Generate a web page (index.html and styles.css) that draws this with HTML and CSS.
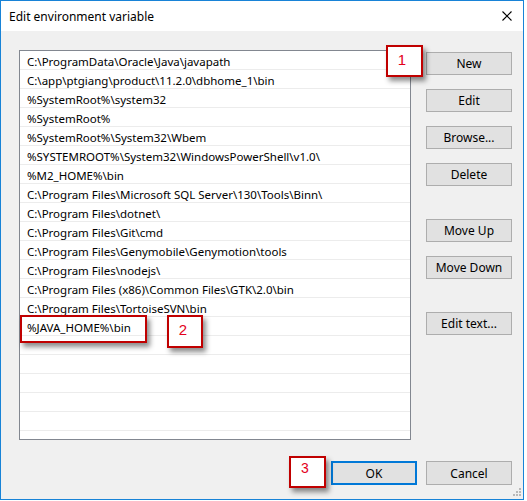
FILE: index.html
```html
<!DOCTYPE html>
<html lang="en">

<head>
    <meta charset="utf-8">
    <meta name="viewport" content="width=device-width, initial-scale=1.0">
    <title>Edit environment variable</title>
    <link rel="stylesheet" href="styles.css">
</head>

<body>
    <div class="vindue">
        <header class="titel">
            <span>Edit environment variable</span>
            <svg class="luk" width="10" height="10" viewBox="0 0 10 10">
                <path d="M0.5 0.5 L9.5 9.5 M9.5 0.5 L0.5 9.5" stroke="#000" stroke-width="1.1" fill="none" />
            </svg>
        </header>

        <main class="indhold">
            <section class="top">
                <ul class="liste">
                    <li>C:\ProgramData\Oracle\Java\javapath</li>
                    <li>C:\app\ptgiang\product\11.2.0\dbhome_1\bin</li>
                    <li>%SystemRoot%\system32</li>
                    <li>%SystemRoot%</li>
                    <li>%SystemRoot%\System32\Wbem</li>
                    <li>%SYSTEMROOT%\System32\WindowsPowerShell\v1.0\</li>
                    <li>%M2_HOME%\bin</li>
                    <li>C:\Program Files\Microsoft SQL Server\130\Tools\Binn\</li>
                    <li>C:\Program Files\dotnet\</li>
                    <li>C:\Program Files\Git\cmd</li>
                    <li>C:\Program Files\Genymobile\Genymotion\tools</li>
                    <li>C:\Program Files\nodejs\</li>
                    <li>C:\Program Files (x86)\Common Files\GTK\2.0\bin</li>
                    <li>C:\Program Files\TortoiseSVN\bin</li>
                    <li>%JAVA_HOME%\bin</li>
                    <li></li>
                    <li></li>
                    <li></li>
                    <li></li>
                    <li></li>
                    <li></li>
                </ul>

                <div class="knapper">
                    <button>New</button>
                    <button>Edit</button>
                    <button>Browse...</button>
                    <button>Delete</button>
                    <button class="afstand">Move Up</button>
                    <button>Move Down</button>
                    <button class="afstand">Edit text...</button>
                </div>
            </section>

            <footer class="bund">
                <button class="ok">OK</button>
                <button>Cancel</button>
            </footer>
        </main>

        <svg class="greb" width="8" height="8" viewBox="0 0 8 8">
            <rect x="6" y="0" width="2" height="2" fill="#b8b8b8" />
            <rect x="3" y="3" width="2" height="2" fill="#b8b8b8" />
            <rect x="6" y="3" width="2" height="2" fill="#b8b8b8" />
            <rect x="0" y="6" width="2" height="2" fill="#b8b8b8" />
            <rect x="3" y="6" width="2" height="2" fill="#b8b8b8" />
            <rect x="6" y="6" width="2" height="2" fill="#b8b8b8" />
        </svg>
    </div>

    <!-- markeringer oven på dialogen -->
    <div class="markering"></div>
    <div class="nummer n1">1</div>
    <div class="nummer n2">2</div>
    <div class="nummer n3">3</div>
</body>

</html>
```

FILE: styles.css
```css
body {
    margin: 0;
    background-color: white;
    font-family: "Noto Sans", "Open Sans", sans-serif;
    font-size: 12px;
    color: black;
}

.vindue {
    position: relative;
    width: 522px;
    height: 498px;
    border: 1px solid #1883d7;
    background-color: #f0f0f0;
    display: flex;
    flex-direction: column;
}

.titel {
    height: 30px;
    background-color: white;
    display: flex;
    align-items: center;
    justify-content: space-between;
    padding: 0 11px 0 8px;
}

.titel span {
    padding-top: 1px;
}

.luk {
    display: block;
}

.indhold {
    padding: 19px 0 0 18px;
}

.top {
    display: flex;
    gap: 15px;
}

.liste {
    list-style: none;
    margin: 0;
    padding: 0;
    width: 390px;
    height: 388px;
    border: 1px solid #828790;
    background-color: white;
    overflow: hidden;
}

.liste li {
    height: 16px;
    line-height: 18px;
    padding: 2px 0 0 7px;
    font-size: 11.5px;
    border-bottom: 1px solid #ececec;
    white-space: nowrap;
}

.knapper {
    display: flex;
    flex-direction: column;
    gap: 14px;
    padding-top: 2px;
}

button {
    width: 86px;
    height: 23px;
    background-color: #e1e1e1;
    border: 1px solid #adadad;
    font-family: "Noto Sans", "Open Sans", sans-serif;
    font-size: 12px;
    color: black;
    padding: 0;
}

.knapper .afstand {
    margin-top: 19px;
}

.bund {
    display: flex;
    justify-content: flex-end;
    gap: 9px;
    padding: 21px 11px 0 0;
}

.bund button {
    height: 24px;
}

.ok {
    border: 2px solid #0078d7;
}

.greb {
    position: absolute;
    right: 2px;
    bottom: 3px;
}

.markering {
    position: absolute;
    left: 20px;
    top: 315px;
    width: 123px;
    height: 24px;
    border: 2px solid #c00000;
    box-shadow: 3px 4px 5px rgba(0, 0, 0, 0.45);
}

.nummer {
    position: absolute;
    width: 28px;
    height: 23px;
    border: 2px solid #c00000;
    background-color: white;
    box-shadow: 3px 4px 5px rgba(0, 0, 0, 0.45);
    color: #e3001b;
    font-family: "Liberation Sans", Arial, sans-serif;
    font-size: 15px;
    line-height: 15px;
    padding: 5px 5px 0 0;
    text-align: center;
    box-sizing: content-box;
}

.nummer.n1 {
    left: 386px;
    top: 45px;
}

.nummer.n2 {
    left: 167px;
    top: 315px;
    width: 28px;
    height: 24px;
    padding-right: 4px;
}

.nummer.n3 {
    left: 289px;
    top: 456px;
    height: 25px;
    padding-top: 3px;
    font-size: 14px;
}
```
